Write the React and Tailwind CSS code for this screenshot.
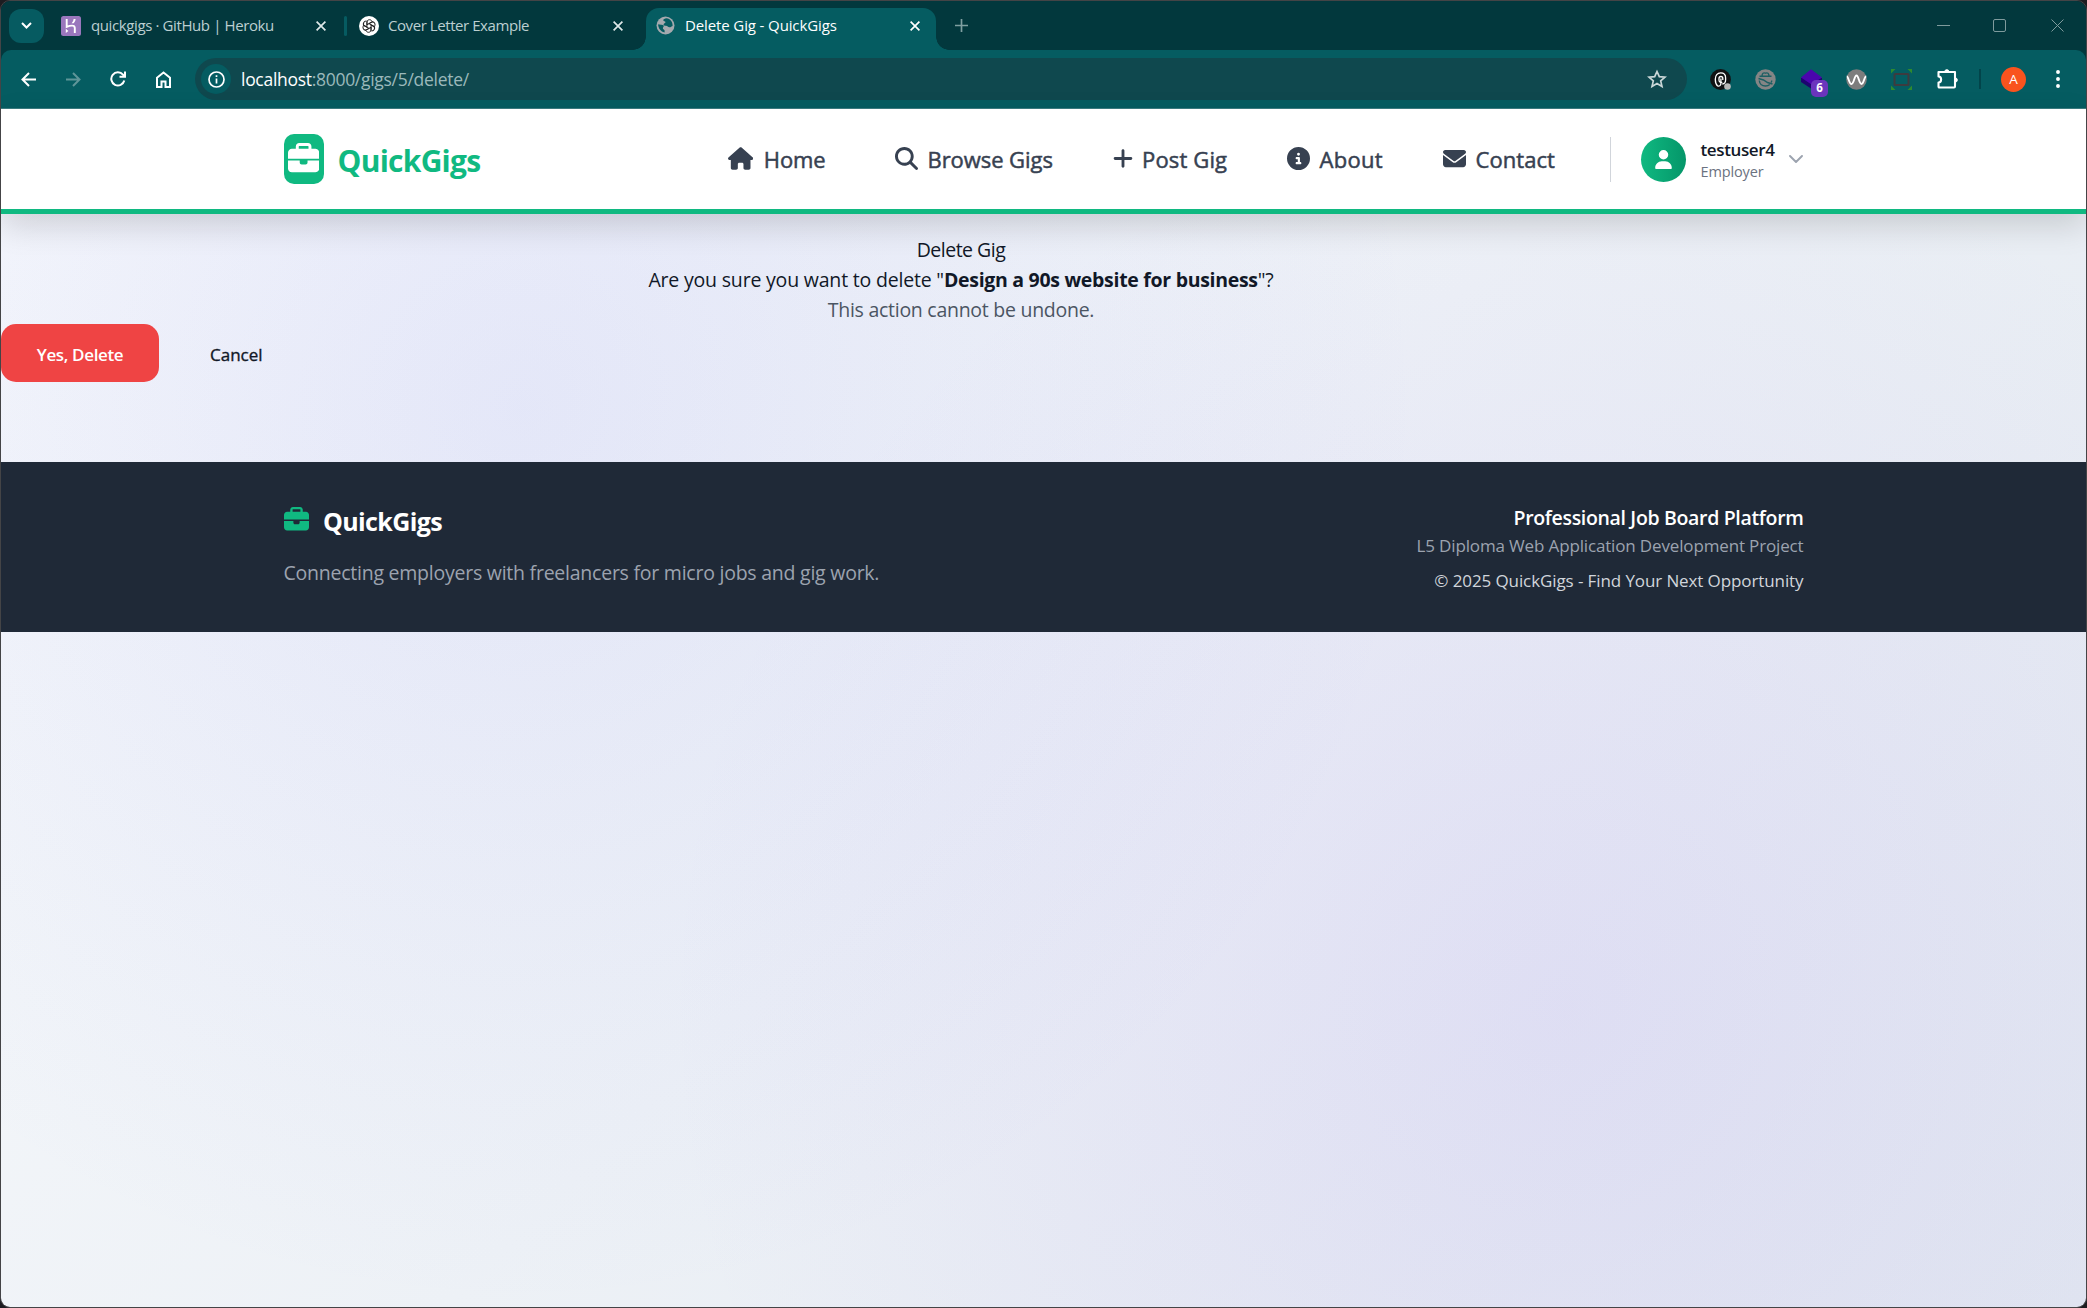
import { FaHouse, FaMagnifyingGlass, FaPlus, FaCircleInfo, FaEnvelope, FaBriefcase, FaUser } from "react-icons/fa6";

const CloseIcon = ({ className = "" }) => (
  <svg className={"size-[10px] shrink-0 " + className} viewBox="0 0 10 10" fill="none" stroke="currentColor" strokeWidth="1.7">
    <path d="M.6.6l8.8 8.8M9.4.6L.6 9.4" />
  </svg>
);

function TabStrip() {
  return (
    <div className="flex h-[49px] shrink-0 items-center bg-[#02383d] text-[15px] leading-5">
      <button className="ml-[8px] flex h-[34px] w-[35px] items-center justify-center rounded-[12px] bg-[#065b61] text-white">
        <svg className="h-[7px] w-[11px]" viewBox="0 0 11 7" fill="none" stroke="currentColor" strokeWidth="2"><path d="M1 1l4.5 4.5L10 1" /></svg>
      </button>

      <div className="ml-[17px] flex w-[283px] items-center text-[#bccfd1]">
        <svg className="size-5 shrink-0" viewBox="0 0 20 20">
          <rect width="20" height="20" rx="2.5" fill="#9a77bd" />
          <path d="M5.700 3v7.900c1.800-.8 3.600-1.300 5.300-1.300 1.900 0 2.800.8 2.800 2.400V17" fill="none" stroke="#fff" strokeWidth="1.900" />
          <path d="M4.800 12.800V17l2.600-2.100zM14.600 3c-.1 1.700-.8 3.100-2 4.300h-2c1.100-1.200 1.800-2.700 2-4.300z" fill="#fff" />
        </svg>
        <span className="-mt-px ml-[10px] w-[225px] shrink-0 whitespace-pre tracking-[-0.39px]">quickgigs · GitHub | Heroku</span>
        <CloseIcon className="text-[#dfe8e8]" />
      </div>
      <div className="h-5 w-[3px] rounded bg-[#065b61]" />
      <div className="ml-[12px] flex w-[274px] items-center text-[#bccfd1]">
        <svg className="size-5 shrink-0" viewBox="0 0 20 20" fill="none" stroke="#222" strokeWidth="1">
          <circle cx="10" cy="10" r="10" fill="#fff" stroke="none" />
          {[0, 60, 120, 180, 240, 300].map((a) => (
            <path key={a} transform={`rotate(${a} 10 10)`} d="M7.900 11.200V6.400c0-1.500 1.100-2.700 2.600-2.700 1 0 1.800.5 2.300 1.300M10 7.700l3.800-2.200" />
          ))}
        </svg>
        <span className="-mt-px ml-[9px] w-[225px] shrink-0 whitespace-pre tracking-[-0.43px]">Cover Letter Example</span>
        <CloseIcon className="text-[#dfe8e8]" />
      </div>

      <div className="size-[13px] self-end bg-[radial-gradient(circle_at_0_0,#02383d_12.5px,#055c61_13px)]" />
      <div className="mt-[7px] flex h-[42px] w-[290px] items-center rounded-t-[13px] bg-[#055c61] pb-[7px] text-white">
        <svg className="ml-[10px] size-[19px] shrink-0" viewBox="0 0 19 19">
          <circle cx="9.500" cy="9.500" r="9" fill="#a4a9ae" />
          <path d="M10.500 2.300c-1.700.3-3.200.7-3.300 2 0 1.200 2.300.6 2.300 1.900 0 1-1.900.9-1.900 2.300 0 1.200 1.200 1.200 2.400 1.200 1.600 0 1.900 1.600 3.400 1.600 1.400 0 2.300-1 3.200-1.300C16.800 5.800 14.200 2.900 10.500 2.300zM2.100 8.300c.1 4 2.700 7.400 6.500 8.300v-2.200c0-.9-1.700-1-1.700-2.200 0-1.100.9-1.300.9-2.100 0-1.400-3.500-1.200-5.700-1.800z" fill="#055c61" />
        </svg>
        <span className="-mt-px ml-[10px] w-[225px] shrink-0 whitespace-pre tracking-[-0.12px]">Delete Gig - QuickGigs</span>
        <CloseIcon />
      </div>
      <div className="size-[13px] self-end bg-[radial-gradient(circle_at_100%_0,#02383d_12.5px,#055c61_13px)]" />
      <svg className="ml-[6px] size-[13px]" viewBox="0 0 13 13" stroke="#7f9fa1" strokeWidth="1.700"><path d="M6.500 0v13M0 6.500h13" /></svg>

      <div className="ml-auto mr-[22px] flex items-center text-[#7f9b9d]">
        <svg className="h-[1px] w-[13px]" viewBox="0 0 13 1"><rect width="13" height="1" fill="currentColor" /></svg>
        <div className="ml-[43px] size-[13px] rounded-[2px] border border-current" />
        <svg className="ml-[45px] size-[13px]" viewBox="0 0 13 13" stroke="currentColor" strokeWidth="1"><path d="M.5.5l12 12M12.500.5l-12 12" /></svg>
      </div>
    </div>
  );
}

function Toolbar() {
  return (
    <div className="shrink-0 bg-[#02383d]">
      <div className="flex h-[59px] items-center rounded-t-[10px] border-b border-[#3b7d82] bg-[#055c61] text-white">
        <svg className="ml-[20px] size-[15px]" viewBox="0 0 15 15" fill="none" stroke="currentColor" strokeWidth="2"><path d="M15 7.500H1.500M8 1L1.500 7.500 8 14" /></svg>
        <svg className="ml-[30px] size-[15px] text-[#5f9598]" viewBox="0 0 15 15" fill="none" stroke="currentColor" strokeWidth="2"><path d="M0 7.500h13.500M7 1l6.500 6.500L7 14" /></svg>
        <svg className="ml-[29px] size-[16px]" viewBox="0 0 16 16" fill="none" stroke="currentColor" strokeWidth="2"><path d="M14.300 9.500A6.600 6.600 0 1 1 13 3.700L14.600 5.600M15 .5v5.300H9.500" /></svg>
        <svg className="ml-[29px] size-[17px]" viewBox="0 0 17 17" fill="none" stroke="currentColor" strokeWidth="2"><path d="M2 6.700L8.500 1.500 15 6.700V16h-4.500v-5.500h-4V16H2z" /></svg>

        <div className="ml-[23px] flex h-[42px] w-[1492px] items-center rounded-full bg-[#0f484e] pl-[6px] text-[17.5px]">
          <div className="flex size-[30px] items-center justify-center rounded-full bg-[#055c61]">
            <svg className="size-[17px]" viewBox="0 0 17 17" fill="none" stroke="currentColor" strokeWidth="1.700"><circle cx="8.500" cy="8.500" r="7.500" /><path d="M8.500 7.500v5M8.500 4.300v1.800" /></svg>
          </div>
          <span className="ml-[10px] whitespace-pre tracking-[-0.29px] text-[#9bb9bb]"><span className="text-white">localhost</span>:8000/gigs/5/delete/</span>
          <svg className="ml-auto mr-[20px] size-[20px]" viewBox="0 0 20 20" fill="none" stroke="#c9d6d7" strokeWidth="1.700"><path d="M10 2.500l2.300 5.200 5.700.5-4.300 3.700 1.300 5.500-5-2.900-5 2.900 1.300-5.500L2 8.200l5.700-.5z" /></svg>
        </div>

        <svg className="ml-[23px] size-[21px]" viewBox="0 0 21 21" fill="none">
          <circle cx="10.500" cy="10.500" r="10.400" fill="#101214" />
          <path d="M12.300 13.300c-2 .5-3.300-.5-3.300-2.300V9.500c0-1.200.8-2 1.900-2 1.200 0 1.900.8 1.900 2V11M10.900 9.500v4.700c0 2.200-1.400 3.300-3.300 2.900M7.600 17.100C5.800 15.500 5.300 13 5.300 10.300c0-3.900 2-6.500 5.400-6.500 3 0 4.900 2 4.900 4.900v2.200c0 2.300-1.200 3.800-3.300 4.100" stroke="#fff" strokeWidth="1.300" />
          <circle cx="17.500" cy="17.500" r="3.300" fill="#b9b9b9" />
        </svg>
        <svg className="ml-[24px] size-[21px]" viewBox="0 0 21 21" fill="none">
          <circle cx="10.500" cy="10.500" r="10.200" fill="#858585" />
          <path d="M7 6.800c.2-2.600 1.300-3.400 3.500-2.600 2.200-.8 3.300 0 3.500 2.600M4.500 7.300h12M4.300 11.500c.3 3.200 2.800 5.500 6.200 5.500 2 0 3.300-.6 4.300-1.600M16.700 11.500c0 .8-.2 1.500-.5 2M3.500 9.500l5 1.500 4 2.500 5 1.500" stroke="#1c5f63" strokeWidth="1.400" />
        </svg>
        <div className="relative ml-[25px] size-[21px]">
          <svg className="size-[21px]" viewBox="0 0 21 21"><path d="M0 13l10 6.500L21 13V9H0z" fill="#1d0470" /><path d="M10 .3L21 8.500 10.500 15.500 0 8.500z" fill="#4a06ad" /></svg>
          <span className="absolute left-[10px] top-[11px] flex size-[17px] items-center justify-center rounded-[5px] bg-[#6b35bd] text-[11.5px] font-bold leading-none">6</span>
        </div>
        <svg className="ml-[24px] size-[21px]" viewBox="0 0 21 21" fill="none"><circle cx="10.500" cy="10.500" r="10.300" fill="#7d7d7d" /><path d="M.8 7.500C2.500 7.500 3 15 5.500 15S8.300 6.500 10.500 6.500 13 15 15.500 15s2.500-7.500 4.700-7.500" stroke="#fff" strokeWidth="1.900" /></svg>
        <svg className="ml-[24px] size-[21px]" viewBox="0 0 21 21" fill="none"><rect x="3.500" y="5" width="14" height="11" rx=".5" stroke="#3d3b3f" strokeWidth="2" /><path d="M0 0h4.500L0 4.500zM21 0v4.500L16.500 0zM0 21v-4.500L4.500 21zM21 21h-4.500l4.500-4.500z" fill="#2f8a2f" /></svg>
        <svg className="ml-[25px] size-[21px]" viewBox="0 0 21 21" fill="none" stroke="#fff" strokeWidth="2.100" strokeLinejoin="round"><path d="M1.500 3H18v14.500c0 .7-.3 1-1 1H2.500c-.7 0-1-.3-1-1v-4c3.500 0 3.500-6 0-6z" /><path d="M7.800 2.500a2 1.800 0 0 1 4 0zM18.500 9a1.800 2 0 0 1 0 4z" fill="#fff" strokeWidth="1" /></svg>
        <div className="ml-[21px] h-5 w-[2px] bg-[#02444a]" />
        <div className="ml-[20px] flex size-[25px] items-center justify-center rounded-full bg-[#f9531e] text-[13.5px]">A</div>
        <svg className="ml-[30px] h-[18px] w-[4px]" viewBox="0 0 4 18" fill="currentColor"><circle cx="2" cy="2" r="1.950" /><circle cx="2" cy="9" r="1.950" /><circle cx="2" cy="16" r="1.950" /></svg>
      </div>
    </div>
  );
}

function NavItem({ icon: Icon, iconClass, className, children }) {
  return (
    <a className={"flex shrink-0 items-center whitespace-pre " + className}>
      <Icon className={"-mt-[2px] h-[23px] shrink-0 " + iconClass} preserveAspectRatio="xMidYMid meet" />
      <span className="text-[22px] [-webkit-text-stroke:0.5px]">{children}</span>
    </a>
  );
}

function SiteHeader() {
  return (
    <header className="relative h-[105px] shrink-0 border-b-[5px] border-[#10b981] bg-white shadow-[0_12px_30px_rgba(0,0,0,0.14)]">
      <div className="mx-auto flex h-[100px] w-[1520px] items-center text-[#374151]">
        <div className="flex h-[50px] w-10 items-start justify-center rounded-[10px] bg-[#10b981] pt-[9px] text-white">
          <FaBriefcase className="size-[31.25px]" />
        </div>
        <span className="ml-[14px] w-[390px] pt-[3px] text-[30px] font-bold leading-none tracking-[-0.73px] text-[#10b981]">QuickGigs</span>
        <NavItem icon={FaHouse} iconClass="mr-[11px] w-[25.3px]" className="w-[167px] tracking-[-0.1px]">Home</NavItem>
        <NavItem icon={FaMagnifyingGlass} iconClass="mr-[10px] w-[23px]" className="w-[218px] tracking-[-0.06px]">Browse Gigs</NavItem>
        <NavItem icon={FaPlus} iconClass="mr-[9.5px] w-[20px]" className="w-[174px] tracking-[0.15px]">Post Gig</NavItem>
        <NavItem icon={FaCircleInfo} iconClass="mr-[10px] w-[23px]" className="w-[156px] tracking-[0.3px]">About</NavItem>
        <NavItem icon={FaEnvelope} iconClass="mr-[10px] w-[23px]" className="w-[167px] tracking-[0.05px]">Contact</NavItem>
        <div className="h-[45px] w-px shrink-0 bg-[#d1d5db]" />
        <div className="ml-[30px] flex size-[45px] shrink-0 items-center justify-center rounded-full bg-gradient-to-r from-[#10b981] to-[#059669]">
          <FaUser className="h-[19px] w-[17px] text-white" />
        </div>
        <div className="ml-[15px] w-[88px] pt-[4px] leading-[22px]">
          <div className="text-[17px] font-semibold tracking-[-0.38px] text-[#111827]">testuser4</div>
          <div className="text-[14.5px] tracking-[-0.13px] text-[#6b7280]">Employer</div>
        </div>
        <svg className="h-[8px] w-[14px] shrink-0" viewBox="0 0 14 8" fill="none" stroke="#9ca3af" strokeWidth="1.900" strokeLinecap="round" strokeLinejoin="round"><path d="M1 1l6 6 6-6" /></svg>
      </div>
    </header>
  );
}

export default function App() {
  return (
    <div className="h-[1308px] w-full overflow-hidden bg-[#1c1c20] font-['Open_Sans','Noto_Sans',sans-serif]">
      <div className="flex h-full flex-col overflow-hidden rounded-[10px] border border-[#444446]">
        <TabStrip />
        <Toolbar />
        <div className="flex min-h-0 flex-1 flex-col bg-[radial-gradient(circle_at_25%_25%,rgba(99,102,241,0.1)_0%,transparent_50%),radial-gradient(circle_at_75%_75%,rgba(139,92,246,0.1)_0%,transparent_50%),linear-gradient(135deg,#f8fafc_0%,#e2e8f0_100%)] text-[#111827]">
          <SiteHeader />

          <main className="h-[248px] w-[1920px] shrink-0 pt-[21px] text-[19.5px] leading-[30px]">
            <div className="text-center">
              <h1 className="tracking-[-0.5px]">Delete Gig</h1>
              <p className="tracking-[-0.19px]">
                Are you sure you want to delete "<strong className="font-bold tracking-[-0.3px]">Design a 90s website for business</strong>"?
              </p>
              <p className="tracking-[-0.27px] text-[#4b5563]">This action cannot be undone.</p>
            </div>
            <div className="-mt-px flex h-[58px] items-center text-[17px]">
              <button className="h-[58px] w-[158px] rounded-[15px] bg-[#ef4444] pt-[3px] font-semibold tracking-[-0.36px] text-white">Yes, Delete</button>
              <a className="ml-[51px] pt-[3px] [-webkit-text-stroke:0.35px]">Cancel</a>
            </div>
          </main>

          <footer className="h-[170px] shrink-0 bg-[#1f2937]">
            <div className="mx-auto flex w-[1520px] justify-between pt-10">
              <div>
                <div className="flex h-9 items-center text-[25px] font-bold tracking-[-0.62px] text-white">
                  <FaBriefcase className="-mt-[2px] mr-[14.500px] size-[25px] text-[#10b981]" />
                  <span className="pt-[3px]">QuickGigs</span>
                </div>
                <p className="mt-[20px] text-[19.5px] leading-[30px] tracking-[-0.24px] text-[#9ca3af]">Connecting employers with freelancers for micro jobs and gig work.</p>
              </div>
              <div className="pt-px text-right text-[17px] leading-[25px]">
                <p className="text-[19.5px] font-semibold leading-[30px] tracking-[-0.33px] text-white">Professional Job Board Platform</p>
                <p className="tracking-[-0.15px] text-[#9ca3af]">L5 Diploma Web Application Development Project</p>
                <p className="mt-[10px] tracking-[-0.1px] text-[#d1d5db]">© 2025 QuickGigs - Find Your Next Opportunity</p>
              </div>
            </div>
          </footer>
        </div>
      </div>
    </div>
  );
}
